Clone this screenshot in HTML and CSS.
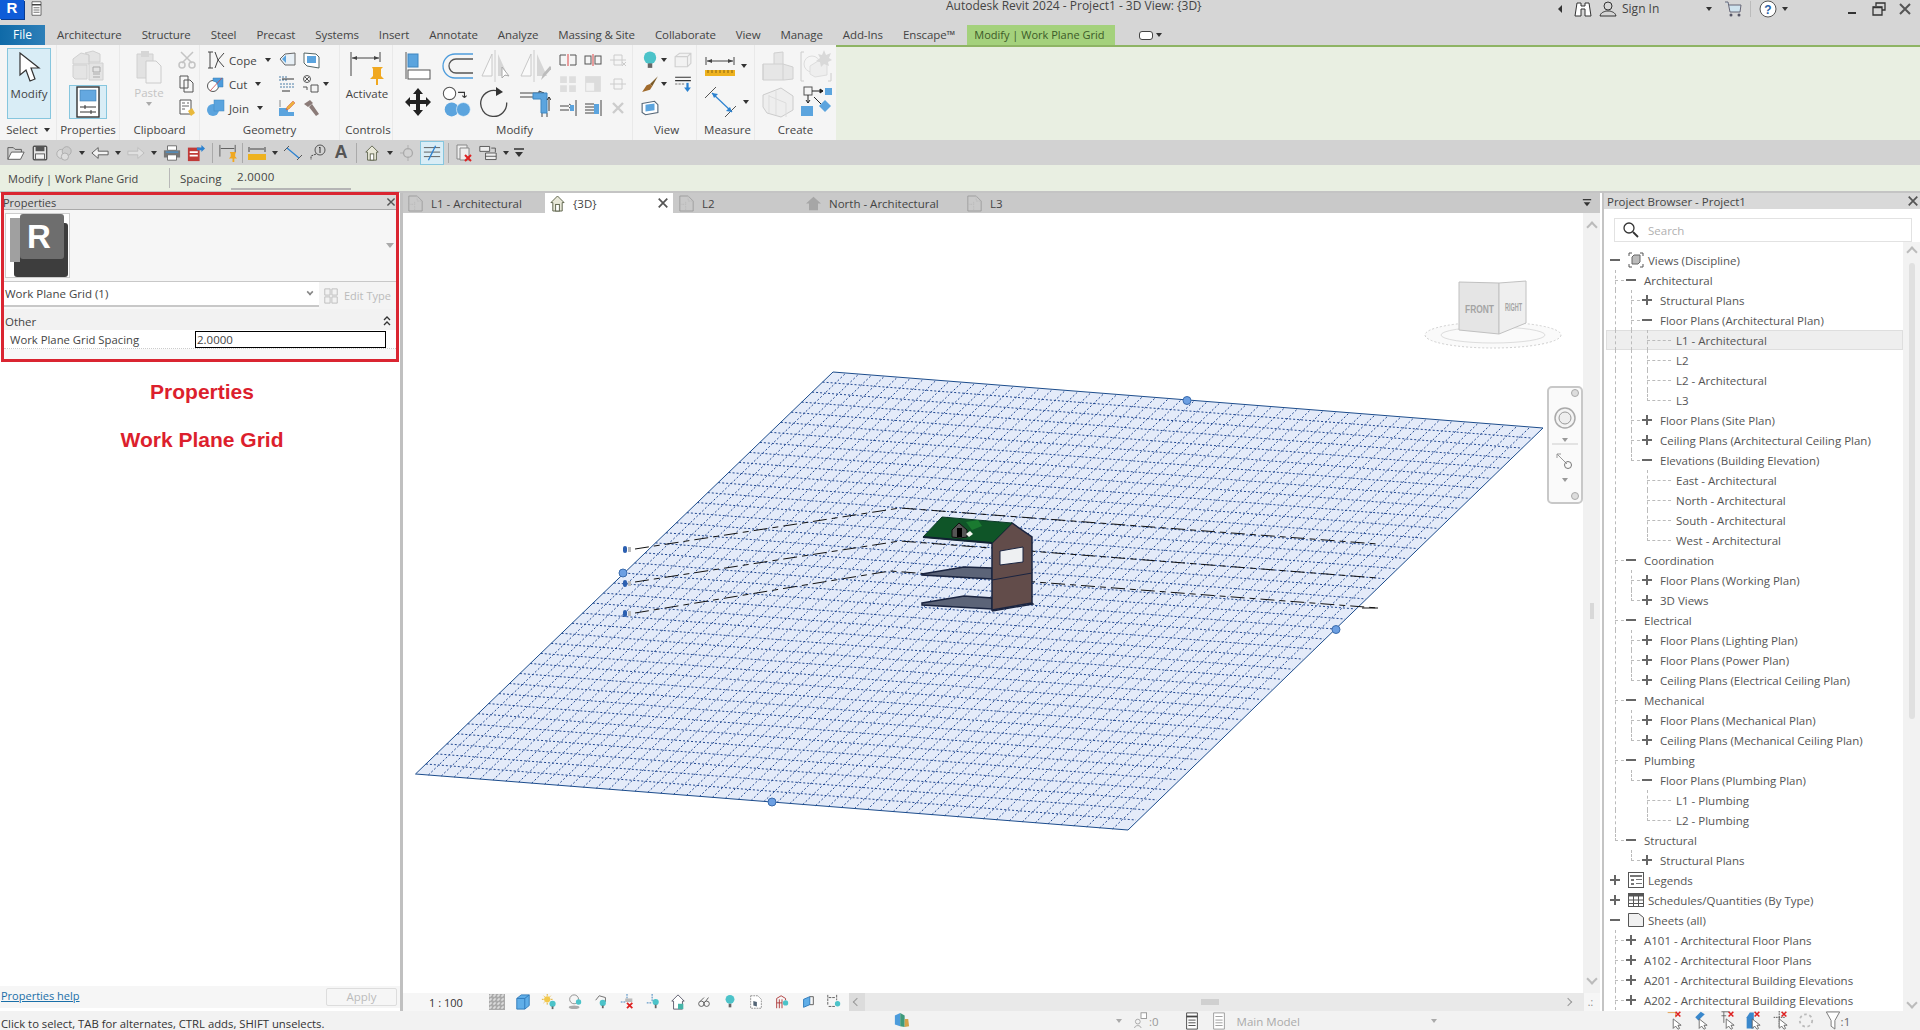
FILE: index.html
```html
<!DOCTYPE html>
<html lang="en">
<head>
<meta charset="utf-8">
<title>Autodesk Revit 2024</title>
<link rel="stylesheet" href="styles.css">
</head>
<body>
<svg class="sprite" aria-hidden="true">
  <defs>
    <symbol id="cursor" viewBox="0 0 24 32"><path d="M3 1v22l6-5 4 11 5-2-4-11h8z" fill="#fff" stroke="#333" stroke-width="1.2"/></symbol>
    <symbol id="types" viewBox="0 0 32 32"><path d="M1 9l8-6 8 2v9H1zM13 3l8-2 7 3v8h-11V5zM1 15h14v14H3l-2-2zM17 13h14v17H17z" fill="#e4e4e4" stroke="#d0d0d0"/><path d="M21 17h7v5h-7zM21 24h7M21 27h7" fill="none" stroke="#aaa"/></symbol>
    <symbol id="propsheet" viewBox="0 0 24 32"><rect x="1" y="1" width="22" height="30" fill="#fff" stroke="#333" stroke-width="1.4"/><rect x="4" y="4" width="16" height="11" fill="#64a8e0" stroke="#3f7db0" stroke-width=".6"/><path d="M4 21h16M4 26h16M9 19v4M15 24v4" stroke="#333" fill="none"/></symbol>
    <symbol id="paste" viewBox="0 0 28 34"><path d="M2 4h16v24H2z" fill="#e2e2e2" stroke="#d0d0d0"/><rect x="6" y="1" width="8" height="6" fill="#d6d6d6"/><path d="M11 11h10l5 5v17H11z" fill="#f4f4f4" stroke="#ccc"/></symbol>
    <symbol id="cut" viewBox="0 0 18 18"><path d="M3 1l11 11M15 1L4 12" stroke="#c4c4c4" stroke-width="1.5" fill="none"/><circle cx="4" cy="14" r="3" fill="none" stroke="#c4c4c4" stroke-width="1.5"/><circle cx="14" cy="14" r="3" fill="none" stroke="#c4c4c4" stroke-width="1.5"/></symbol>
    <symbol id="copy" viewBox="0 0 18 18"><path d="M2 1h8v12H2zM6 5h6l3 3v9H6z" fill="#f7f7f7" stroke="#555"/></symbol>
    <symbol id="match" viewBox="0 0 18 18"><path d="M2 1h11v14H2z" fill="#fff" stroke="#555"/><path d="M4 4h3M9 4h2M4 7h7M4 10h3" stroke="#666"/><path d="M10 12l4-3 3 5-4 3z" fill="#e9b93c"/></symbol>
    <symbol id="cope" viewBox="0 0 18 18"><path d="M1 1h5M1 17h5M3 1v16M8 1l3 8-3 8M17 2l-6 7 6 7" fill="none" stroke="#444"/></symbol>
    <symbol id="cutg" viewBox="0 0 18 18"><circle cx="6" cy="11" r="5.500" fill="#fff" stroke="#555"/><path d="M6 3h10v9h-5a6 6 0 0 0-5-6z" fill="#4d9cdc" stroke="#3a7db2" stroke-width=".5"/><path d="M3 16l12-13" stroke="#c44" stroke-width=".8"/></symbol>
    <symbol id="join" viewBox="0 0 18 18"><circle cx="6" cy="11" r="6" fill="#5ba4de"/><rect x="7" y="1" width="10" height="11" fill="#5ba4de" stroke="#3f86c0" stroke-width=".5"/></symbol>
    <symbol id="g1" viewBox="0 0 18 18"><path d="M7 3l10-1v12H7L2 8z" fill="#e8f0f6" stroke="#666"/><path d="M8 4l-4 4 4 4" fill="#5ba4de"/></symbol>
    <symbol id="g2" viewBox="0 0 18 18"><path d="M2 2l12 1 3 3v11L5 15 2 12z" fill="#fff" stroke="#566"/><rect x="5" y="5" width="9" height="7" fill="#5ba4de"/></symbol>
    <symbol id="g3" viewBox="0 0 18 18"><path d="M2 1v6M5 1v6M8 1v6M2 9h14M2 12h14" stroke="#4d7ea8" fill="none" stroke-dasharray="2 1"/><path d="M4 4h12M12 16H4" stroke="#333"/></symbol>
    <symbol id="g4" viewBox="0 0 18 18"><circle cx="5" cy="4" r="3.500" fill="none" stroke="#555"/><path d="M3 2l4 4M7 2L3 6M1 12h4v3M9 10h7v7H9z" stroke="#555" fill="none"/></symbol>
    <symbol id="g5" viewBox="0 0 18 18"><path d="M1 9h9v4h6v4H1z" fill="#5ba4de"/><path d="M9 8l6-6 2 2-6 6-3 1z" fill="#eeb23c" stroke="#c33" stroke-width=".4"/><path d="M2 1v7" stroke="#888"/></symbol>
    <symbol id="g6" viewBox="0 0 18 18"><path d="M2 5l6-4 3 3-5 4zM7 8l3-3 7 10-3 2z" fill="#8b7b78"/></symbol>
    <symbol id="activate" viewBox="0 0 34 34"><path d="M1 1v24M30 1v10M2 7h27" stroke="#444" fill="none"/><path d="M2 7l5-2v4zM29 7l-5-2v4z" fill="#444"/><path d="M22 16h11l-2 2v7l3 3H20l3-3v-7zM26 28h2v6h-2z" fill="#f0a820"/></symbol>
    <symbol id="align" viewBox="0 0 26 28"><path d="M1 0v27" stroke="#555"/><rect x="3" y="2" width="10" height="13" fill="#5ba4de" stroke="#3f86c0"/><rect x="3" y="18" width="22" height="9" fill="#fff" stroke="#555"/></symbol>
    <symbol id="offset" viewBox="0 0 32 28"><path d="M32 2H14a12 12 0 0 0 0 24h18" fill="none" stroke="#4d9cdc" stroke-width="1.3"/><path d="M32 7H15a7 7 0 0 0 0 14h17" fill="none" stroke="#555" stroke-width="1.3"/></symbol>
    <symbol id="mirror" viewBox="0 0 32 32"><path d="M12 4L2 26h10z" fill="#fafafa" stroke="#c8c8c8"/><path d="M15 0v32" stroke="#ccc"/><path d="M18 4l10 22H18z" fill="#d6d6d6"/><path d="M22 17v11l3-3 4 1z" fill="#fff" stroke="#aaa"/></symbol>
    <symbol id="mirror2" viewBox="0 0 32 32"><path d="M12 4L2 26h10z" fill="#fafafa" stroke="#c8c8c8"/><path d="M15 0v32" stroke="#ccc"/><path d="M18 4l10 22H18z" fill="#d6d6d6"/><path d="M22 30l2-6 7-8 2 2-7 8z" fill="#bcbcbc"/></symbol>
    <symbol id="move" viewBox="0 0 26 28"><path d="M13 0l5 6h-3v6h6V9l5 5-5 5v-3h-6v6h3l-5 6-5-6h3v-6H5v3l-5-5 5-5v3h6V6H8z" fill="#222"/></symbol>
    <symbol id="copyb" viewBox="0 0 30 30"><circle cx="8" cy="7" r="5.800" fill="#fff" stroke="#555"/><path d="M16 6h6v5M22 11l-2-2M22 11l2-2" fill="none" stroke="#333"/><circle cx="10" cy="22" r="6.500" fill="#5ba4de"/><circle cx="21" cy="22" r="6.500" fill="#5ba4de" stroke="#f0f7fc" stroke-width=".6"/></symbol>
    <symbol id="rotate" viewBox="0 0 30 32"><path d="M19 7A13 13 0 1 1 6 8" fill="none" stroke="#444" stroke-width="1.3" transform="rotate(60 15 18) translate(0 1)"/><path d="M15 1l7 5-7 4z" fill="#333"/></symbol>
    <symbol id="trim" viewBox="0 0 32 30"><path d="M1 6h24M1 10h14M25 6l-5-2v4zM23 26v4M28 26v4" stroke="#444" fill="none"/><path d="M14 6h14v20h-6V12h-8z" fill="#5ba4de" stroke="#3f86c0"/><path d="M30 10v14M30 10l-2 3M30 10l2 3" stroke="#333" fill="none"/></symbol>
    <symbol id="s1" viewBox="0 0 18 12"><path d="M7 1H1v10h6M11 1h6v10h-6" fill="none" stroke="#555"/><path d="M9 0v12" stroke="#d44"/></symbol>
    <symbol id="s2" viewBox="0 0 18 12"><rect x="1" y="2" width="6" height="8" fill="none" stroke="#555"/><rect x="11" y="2" width="6" height="8" fill="none" stroke="#555"/><path d="M9 0v12" stroke="#d44"/></symbol>
    <symbol id="s3" viewBox="0 0 18 14"><path d="M1 7h16M5 2h8v10H5z" fill="none" stroke="#ccc"/><path d="M13 9l4 4M17 9l-4 4" stroke="#ccc"/></symbol>
    <symbol id="s4" viewBox="0 0 16 16"><path d="M1 1h6v6H1zM9 1h6v6H9zM1 9h6v6H1zM9 9h6v6H9z" fill="#dedede"/></symbol>
    <symbol id="s5" viewBox="0 0 16 16"><path d="M1 1h14v14H1z" fill="#dcdcdc"/><rect x="2" y="7" width="7" height="7" fill="#f2f2f2"/></symbol>
    <symbol id="s6" viewBox="0 0 18 12"><path d="M1 6h16M5 1h8v10H5z" fill="none" stroke="#ccc"/></symbol>
    <symbol id="s7" viewBox="0 0 18 16"><path d="M1 6h9M1 10h9M10 4l3 2-3 2M17 0v16" stroke="#444" fill="none"/><rect x="11" y="5" width="4" height="6" fill="#5ba4de"/></symbol>
    <symbol id="s8" viewBox="0 0 18 16"><path d="M1 4h9M1 7h9M1 10h9M1 13h9M17 0v16" stroke="#444" fill="none"/><rect x="10" y="4" width="5" height="10" fill="#5ba4de"/></symbol>
    <symbol id="xg" viewBox="0 0 14 14"><path d="M2 2l10 10M12 2L2 12" stroke="#ccc" stroke-width="2.400"/></symbol>
    <symbol id="bulb" viewBox="0 0 14 16"><circle cx="7" cy="6" r="5.500" fill="#4cc3c9"/><rect x="5" y="11" width="4" height="4" fill="#666"/></symbol>
    <symbol id="boxg" viewBox="0 0 16 14"><path d="M1 4l4-3h10v9l-3 3H1zM1 4h11v9M12 4l3-3" fill="#f2f2f2" stroke="#d0d0d0"/></symbol>
    <symbol id="brush" viewBox="0 0 16 16"><path d="M15 1L8 8l2 2z" fill="#7c5b28"/><path d="M8 8l-3 1-4 6 7-2 2-3z" fill="#a06a2c"/></symbol>
    <symbol id="lines" viewBox="0 0 16 16"><path d="M1 2h14M1 5h14" stroke="#333"/><path d="M1 8h8" stroke="#777" stroke-dasharray="2 1"/><path d="M12 7v6" stroke="#2c82d0" stroke-width="2"/><path d="M9 11h6l-3 4z" fill="#2c82d0"/></symbol>
    <symbol id="section" viewBox="0 0 16 14"><path d="M1 3l11-2 3 3v7L4 13 1 11z" fill="#fff" stroke="#567"/><path d="M4 4l8-1v6l-8 1z" fill="#5ba4de"/></symbol>
    <symbol id="ruler" viewBox="0 0 30 20"><path d="M1 1v8M29 1v8M2 5h26" stroke="#444" fill="none"/><path d="M2 5l5-2v4zM28 5l-5-2v4z" fill="#444"/><rect x="0" y="14" width="30" height="6" fill="#eeb21e"/><path d="M3 14v3M7 14v3M11 14v3M15 14v3M19 14v3M23 14v3M27 14v3" stroke="#8a6410"/></symbol>
    <symbol id="aligned" viewBox="0 0 32 32"><path d="M0 12L11 1M20 31l11-11" stroke="#555" fill="none"/><path d="M7 7l20 19" stroke="#2c82d0" stroke-width="1.200"/><path d="M7 7l6 1-4 4zM27 26l-6-1 4-4z" fill="#2c82d0"/></symbol>
    <symbol id="c1" viewBox="0 0 32 30"><path d="M1 13h11V2l9-1v12l10 3v12l-9 1H1z" fill="#e6e6e6" stroke="#d0d0d0"/><path d="M1 13v16M12 13h9v16" stroke="#d0d0d0" fill="none"/></symbol>
    <symbol id="c2" viewBox="0 0 32 32"><path d="M4 2H1v29h3M28 31h3v-8" fill="none" stroke="#ccc"/><circle cx="12" cy="14" r="8" fill="none" stroke="#ddd"/><path d="M10 16l8-5 9 3v11l-12 2-5-3z" fill="#eee" stroke="#ddd"/><path d="M24 0l2 5 5-2-2 5 3 2-4 2 1 4-5-2-3 3-1-5-4-1 4-3-2-4 4 1z" fill="#d9d9d9"/></symbol>
    <symbol id="c3" viewBox="0 0 32 30"><path d="M1 8l18-7 12 8v14l-12 7L5 26 1 20z" fill="#eee" stroke="#ccc"/><path d="M7 8v18M14 4v24M7 9l17 7v14" fill="none" stroke="#ddd"/></symbol>
    <symbol id="c4" viewBox="0 0 32 32"><rect x="4" y="1" width="8" height="8" fill="none" stroke="#555"/><path d="M12 5h11M23 5l-3-2v4z" stroke="#222" fill="#222"/><rect x="25" y="2" width="7" height="7" fill="#5ba4de"/><path d="M8 9v8M14 11l7 7M8 17l-2-3M8 17l2-3" stroke="#222" fill="none"/><rect x="1" y="20" width="12" height="10" fill="#5ba4de"/><path d="M25 14l6 6-6 6-6-6z" fill="#5ba4de"/></symbol>
    <symbol id="open" viewBox="0 0 20 18"><path d="M1 16V3h6l2 2h7v3" fill="none" stroke="#555"/><path d="M1 16l4-8h14l-4 8z" fill="#fff" stroke="#555"/></symbol>
    <symbol id="save" viewBox="0 0 18 18"><rect x="1.500" y="1.500" width="15" height="15" rx="1" fill="#e8e8e8" stroke="#555" stroke-width="1.600"/><rect x="4" y="2" width="10" height="5" fill="#555"/><rect x="4" y="10" width="10" height="6" fill="#f4f4f4" stroke="#555"/></symbol>
    <symbol id="sync" viewBox="0 0 20 18"><circle cx="7" cy="10" r="5" fill="#ddd" stroke="#aaa"/><circle cx="13" cy="7" r="5" fill="#ccc" stroke="#aaa"/><circle cx="11" cy="13" r="4" fill="#ddd" stroke="#aaa"/></symbol>
    <symbol id="undo" viewBox="0 0 20 14"><path d="M8 1L1 7l7 6V9h11V5H8z" fill="#f3f3f3" stroke="#555"/></symbol>
    <symbol id="redo" viewBox="0 0 20 14"><path d="M12 1l7 6-7 6V9H1V5h11z" fill="#e0e0e0" stroke="#bbb"/></symbol>
    <symbol id="print" viewBox="0 0 20 18"><path d="M5 1h10v5H5z" fill="#fff" stroke="#666"/><path d="M1 6h18v8H1z" fill="#777"/><path d="M5 11h10v6H5z" fill="#fff" stroke="#666"/><path d="M3 8h14" stroke="#4a90c8" stroke-width="1.500"/></symbol>
    <symbol id="redsheet" viewBox="0 0 20 20"><path d="M1 4h13v15H1z" fill="#c03a38"/><path d="M3 8h9v2H3zM3 12h9v2H3z" fill="#fff"/><path d="M11 4h5V1l4 4-4 4V7h-5z" fill="#2c82d0"/></symbol>
    <symbol id="dimq" viewBox="0 0 20 20"><path d="M1 1v13M18 1v8M2 5h15" stroke="#555" fill="none"/><path d="M12 9h7l-1 2v3l2 2H11l2-2v-3zM15 16h2v4h-2z" fill="#f0a820"/></symbol>
    <symbol id="rulerq" viewBox="0 0 18 14"><path d="M1 1v5M17 1v5M2 3h14" stroke="#444" fill="none"/><rect y="8" width="18" height="6" fill="#eeb21e"/></symbol>
    <symbol id="alq" viewBox="0 0 18 18"><path d="M0 7l5-5M13 16l5-5" stroke="#555" fill="none"/><path d="M3 4l12 10" stroke="#2c82d0" stroke-width="1.300"/></symbol>
    <symbol id="tagq" viewBox="0 0 18 18"><circle cx="12" cy="6" r="5" fill="none" stroke="#555"/><path d="M11 4l1-1v6" stroke="#333" fill="none"/><path d="M8 10l-5 2v4" stroke="#444" stroke-dasharray="2 1" fill="none"/></symbol>
    <symbol id="home" viewBox="0 0 16 18"><path d="M8 1L1 8h2v9h10V8h2z" fill="#e8e8d8" stroke="#5a6048"/><rect x="6" y="10" width="4" height="7" fill="#fff" stroke="#5a6048"/></symbol>
    <symbol id="homeg" viewBox="0 0 20 18"><path d="M10 0L0 9h4v9h12V9h4z" fill="#a6a6a6"/></symbol>
    <symbol id="diamond" viewBox="0 0 18 18"><circle cx="9" cy="9" r="5" fill="none" stroke="#aaa" stroke-width="1.500"/><path d="M9 0v5M9 13v5M0 9h4" stroke="#aaa"/></symbol>
    <symbol id="thin" viewBox="0 0 20 18"><path d="M1 3h18M1 8h18M1 13h18" stroke="#555"/><path d="M6 17L14 1" stroke="#2c82d0" stroke-width="1.500"/></symbol>
    <symbol id="closeh" viewBox="0 0 18 18"><path d="M2 1h10v14H2z" fill="#eee" stroke="#888"/><path d="M5 4h9v12H5z" fill="#eee" stroke="#888"/><path d="M10 11l6 6M16 11l-6 6" stroke="#d22" stroke-width="2"/></symbol>
    <symbol id="switch" viewBox="0 0 22 18"><path d="M1 1h12v6H1zM8 9h13v8H8zM8 13h13" fill="#eee" stroke="#444"/><path d="M15 3h5v5" fill="none" stroke="#444"/></symbol>
    <symbol id="custom" viewBox="0 0 12 10"><path d="M1 1h10" stroke="#333" stroke-width="1.500"/><path d="M2 4h8L6 9z" fill="#333"/></symbol>
    <symbol id="sheet" viewBox="0 0 18 20"><path d="M1 1h10l6 6v12H1z" fill="none" stroke="#999"/><path d="M11 1v6h6M1 11h7v8M8 8v3" fill="none" stroke="#bbb" stroke-dasharray="2 1"/></symbol>
    <symbol id="binoc" viewBox="0 0 18 16"><path d="M3 2h4v3h4V2h4l2 13h-6V8H7v7H1z" fill="#fff" stroke="#333"/></symbol>
    <symbol id="person" viewBox="0 0 18 16"><circle cx="9" cy="5" r="4" fill="none" stroke="#333"/><path d="M1 15c1-4 4-4 6-5h4c2 1 5 1 6 5z" fill="none" stroke="#333"/></symbol>
    <symbol id="cart" viewBox="0 0 18 16"><path d="M1 1h3l2 10h10l1-7H5" fill="#cfe3ee" stroke="#667"/><circle cx="7" cy="14" r="1.500" fill="#556"/><circle cx="15" cy="14" r="1.500" fill="#556"/></symbol>
    <symbol id="help" viewBox="0 0 18 18"><circle cx="9" cy="9" r="8" fill="#fff" stroke="#555"/><text x="9" y="13.500" font-size="12" font-weight="700" text-anchor="middle" fill="#2b62a8" font-family="Liberation Sans">?</text></symbol>
    <symbol id="restore" viewBox="0 0 14 14"><path d="M4 4V1h9v7h-3" fill="none" stroke="#333" stroke-width="1.300"/><path d="M1 5h9v8H1z" fill="none" stroke="#333" stroke-width="1.300"/><path d="M1 5.500h9" stroke="#333" stroke-width="1.500"/></symbol>
    <symbol id="xd" viewBox="0 0 14 14"><path d="M2 2l10 10M12 2L2 12" stroke="#555" stroke-width="2"/></symbol>
    <symbol id="views" viewBox="0 0 16 16"><path d="M1 4V1h3M12 1h3v3M1 12v3h3M12 15h3v-3" fill="none" stroke="#555"/><path d="M4 5l2-2h6v7l-2 2H4z" fill="#bbb" stroke="#666"/></symbol>
    <symbol id="legends" viewBox="0 0 16 16"><rect x=".5" y=".5" width="15" height="15" fill="#fff" stroke="#555"/><path d="M2 3h12v2H2zM3 7h3v2H3zM8 7h6v1H8zM3 11h3v2H3zM8 11h6v1H8z" fill="#777"/></symbol>
    <symbol id="sched" viewBox="0 0 16 14"><rect x=".5" y=".5" width="15" height="13" fill="#fff" stroke="#555"/><rect x="1" y="1" width="14" height="2.500" fill="#555"/><path d="M1 7h14M1 10.500h14M5.500 3v10M10.500 3v10" stroke="#555"/></symbol>
    <symbol id="sheetb" viewBox="0 0 16 14"><path d="M.5.5h10l5 4v9H.500z" fill="#f0f0f0" stroke="#555"/></symbol>
    <symbol id="search" viewBox="0 0 16 16"><circle cx="6" cy="6" r="5" fill="none" stroke="#333" stroke-width="1.300"/><path d="M10 10l5 5" stroke="#333" stroke-width="1.800"/></symbol>
    <symbol id="edittype" viewBox="0 0 16 18"><path d="M1 1h6v7H1zM9 1h6v7H9zM1 10h6v7H1zM9 10h6v7H9z" fill="#f2f2f2" stroke="#bbb"/></symbol>
    <symbol id="dblup" viewBox="0 0 8 12"><path d="M1 5l3-3 3 3M1 10l3-3 3 3" fill="none" stroke="#333" stroke-width="1.300"/></symbol>
    <symbol id="vgrid" viewBox="0 0 16 16"><rect width="16" height="16" fill="#aaa"/><path d="M0 2h16M0 6h16M0 10h16M0 14h16M2 0v16M6 0v16M10 0v16M14 0v16" stroke="#eee" stroke-dasharray="2 2"/></symbol>
    <symbol id="vcube" viewBox="0 0 16 18"><path d="M1 5l5-4h9v12l-5 4H1z" fill="#60aee8" stroke="#2c78b8"/><path d="M1 5h9v12M10 5l5-4" stroke="#2c78b8" fill="none"/></symbol>
    <symbol id="vsun" viewBox="0 0 16 18"><circle cx="6" cy="6" r="3.500" fill="#f2c84a"/><path d="M6 0v2M6 10v2M0 6h2M10 6h2M2 2l1 1M10 2L9 3M2 10l1-1" stroke="#e0a820"/><circle cx="12" cy="11" r="3.500" fill="#4cc3c9"/><rect x="11" y="14" width="2" height="3" fill="#666"/></symbol>
    <symbol id="vshadow" viewBox="0 0 16 18"><circle cx="7" cy="6" r="5" fill="none" stroke="#888"/><ellipse cx="7" cy="15" rx="6" ry="2" fill="#aaa"/><circle cx="12" cy="9" r="3" fill="#4cc3c9"/></symbol>
    <symbol id="vcrop" viewBox="0 0 16 18"><path d="M2 7l4-5 7 2v5" fill="none" stroke="#666"/><circle cx="10" cy="10" r="3.500" fill="#4cc3c9"/><rect x="9" y="13" width="2" height="3" fill="#666"/></symbol>
    <symbol id="vcropx" viewBox="0 0 16 18"><path d="M8 0v7M1 9h6" stroke="#2c78b8" stroke-dasharray="2 1"/><rect x="6" y="5" width="8" height="4" fill="#bbb"/><path d="M8 10l6 6M14 10l-6 6" stroke="#d22" stroke-width="2"/></symbol>
    <symbol id="vpin" viewBox="0 0 16 18"><path d="M7 0v8M1 10h6" stroke="#2c78b8" stroke-dasharray="2 1"/><circle cx="11" cy="9" r="3.500" fill="#4cc3c9"/><rect x="10" y="12" width="2" height="4" fill="#666"/></symbol>
    <symbol id="vhome" viewBox="0 0 16 18"><path d="M8 1L1 8h2v9h10V8h2z" fill="#fff" stroke="#556"/><rect x="8" y="11" width="6" height="6" fill="#45b4a8"/></symbol>
    <symbol id="vglass" viewBox="0 0 16 18"><circle cx="5" cy="11" r="3" fill="none" stroke="#555"/><circle cx="11" cy="11" r="3" fill="none" stroke="#555"/><path d="M4 8l4-4M10 8l3-4" stroke="#555"/></symbol>
    <symbol id="vbulb" viewBox="0 0 16 18"><circle cx="8" cy="6" r="5" fill="#4cc3c9"/><rect x="6.500" y="11" width="3" height="4" fill="#666"/></symbol>
    <symbol id="vsheet" viewBox="0 0 16 18"><path d="M2 2h8l4 4v10H2z" fill="#fff" stroke="#888" stroke-dasharray="2 1"/><path d="M5 8l4 1v5l-4-1z" fill="#567"/></symbol>
    <symbol id="vred" viewBox="0 0 16 18"><path d="M2 16V5l5-3 5 3v2" fill="none" stroke="#a33"/><path d="M5 16V6M8 16V6M2 10h6" stroke="#a33"/><circle cx="12" cy="10" r="3" fill="#4cc3c9"/></symbol>
    <symbol id="vbox" viewBox="0 0 16 18"><path d="M3 6l7-3v9l-7 3z" fill="#60aee8" stroke="#2c78b8"/><path d="M10 3h4v9h-4" fill="none" stroke="#555"/></symbol>
    <symbol id="vdim" viewBox="0 0 16 18"><path d="M1 1v12M11 1v6M2 4h8M2 14h7" stroke="#555" stroke-dasharray="3 1"/><circle cx="12" cy="11" r="3" fill="#4cc3c9"/></symbol>
    <symbol id="stsel" viewBox="0 0 18 24"><path d="M1 2h10v6" fill="none" stroke="#e09030"/><path d="M8 10v12l3-3 3 4 2-1-2-4h4z" fill="#fff" stroke="#555"/><path d="M11 1l6 6M17 1l-6 6" stroke="#d22" stroke-width="2"/></symbol>
    <symbol id="stsel2" viewBox="0 0 18 24"><path d="M3 8l7-7 5 3-8 8z" fill="#3a88cc"/><path d="M8 10v12l3-3 3 4 2-1-2-4h4z" fill="#fff" stroke="#555"/></symbol>
    <symbol id="stsel3" viewBox="0 0 18 24"><path d="M2 1h10M5 1v14M2 6h6" stroke="#555" fill="none"/><path d="M8 10v12l3-3 3 4 2-1-2-4h4z" fill="#fff" stroke="#555"/><path d="M11 1l6 6M17 1l-6 6" stroke="#d22" stroke-width="2"/></symbol>
    <symbol id="stsel4" viewBox="0 0 18 24"><path d="M1 8l4-6h5v20H1z" fill="#3a88cc"/><path d="M8 10v12l3-3 3 4 2-1-2-4h4z" fill="#fff" stroke="#555"/><path d="M11 1l6 6M17 1l-6 6" stroke="#d22" stroke-width="2"/></symbol>
    <symbol id="stsel5" viewBox="0 0 18 24"><path d="M8 0v20M1 8h14" stroke="#333" stroke-dasharray="2 1"/><path d="M8 10v12l3-3 3 4 2-1-2-4h4z" fill="#fff" stroke="#555"/><path d="M11 1l6 6M17 1l-6 6" stroke="#d22" stroke-width="2"/></symbol>
    <symbol id="stdrag" viewBox="0 0 18 18"><circle cx="9" cy="9" r="7" fill="none" stroke="#bbb" stroke-width="2" stroke-dasharray="3 3"/></symbol>
    <symbol id="funnel" viewBox="0 0 16 20"><path d="M1 1h14l-5 9v9l-4-3v-6z" fill="#fff" stroke="#777"/></symbol>
    <symbol id="worksets" viewBox="0 0 18 20"><circle cx="5" cy="12" r="3" fill="none" stroke="#999"/><path d="M1 20c0-4 8-4 8 0" fill="none" stroke="#999"/><rect x="9" y="1" width="7" height="7" fill="#fff" stroke="#888"/></symbol>
    <symbol id="slist" viewBox="0 0 14 20"><path d="M1 1h12v18H1z" fill="#fff" stroke="#444"/><path d="M1 5h12" stroke="#444" stroke-width="2"/><path d="M3 9h8M3 12h8M3 15h8" stroke="#444"/></symbol>
    <symbol id="slistg" viewBox="0 0 14 20"><path d="M1 1h12v18H1z" fill="#fff" stroke="#999"/><path d="M3 5h8M3 9h8M3 12h8M3 15h8" stroke="#999"/></symbol>
    <symbol id="bld" viewBox="0 0 18 18"><path d="M1 4l6-3v15l-6-2z" fill="#4c9cdc"/><path d="M7 1l5 3v13l-5-1z" fill="#3e9a7c"/><path d="M12 8h4l1 8-5 1z" fill="#d6a24a"/></symbol>
  </defs>
</svg>

<header class="titlebar">
  <div class="logo">R</div>
  <svg class="t-icon"><use href="#slist"/></svg>
  <div class="apptitle">Autodesk Revit 2024 - Project1 - 3D View: {3D}</div>
  <div class="t-right">
    <span class="tri-l"></span>
    <svg class="i18 m-binoc"><use href="#binoc"/></svg>
    <svg class="i18 m-person"><use href="#person"/></svg>
    <span class="signin">Sign In</span>
    <span class="dd m-dd1"></span>
    <svg class="i18 m-cart"><use href="#cart"/></svg>
    <span class="t-sep"></span>
    <svg class="i18"><use href="#help"/></svg>
    <span class="dd m-dd2"></span>
    <span class="minbtn"></span>
    <svg class="i14 m-rest"><use href="#restore"/></svg>
    <svg class="i14 m-close"><use href="#xd"/></svg>
  </div>
</header>

<nav class="tabs">
  <span class="tab-file">File</span>
  <span class="tab first">Architecture</span><span class="tab">Structure</span><span class="tab">Steel</span><span class="tab">Precast</span><span class="tab">Systems</span><span class="tab">Insert</span><span class="tab">Annotate</span><span class="tab">Analyze</span><span class="tab">Massing &amp; Site</span><span class="tab">Collaborate</span><span class="tab">View</span><span class="tab">Manage</span><span class="tab">Add-Ins</span><span class="tab">Enscape™</span>
  <span class="tab-ctx">Modify | Work Plane Grid</span>
  <span class="ctx-extra"><span class="ctx-pill"></span><span class="dd"></span></span>
</nav>

<section class="ribbon">
  <div class="panel p-select">
    <div class="pbody">
      <div class="modify-btn"><svg class="i-cursor"><use href="#cursor"/></svg><span>Modify</span></div>
    </div>
    <div class="plabel">Select <span class="dd dd-label"></span></div>
  </div>
  <div class="panel p-props">
    <div class="pbody props-col">
      <svg class="i32"><use href="#types"/></svg>
      <div class="props-btn"><svg class="i-sheet"><use href="#propsheet"/></svg></div>
    </div>
    <div class="plabel">Properties</div>
  </div>
  <div class="panel p-clip">
    <div class="pbody clip-row">
      <div class="paste"><svg class="i-paste"><use href="#paste"/></svg><span>Paste</span><span class="dd dd-grey"></span></div>
      <div class="col3">
        <div class="cell"><svg class="i18"><use href="#cut"/></svg></div>
        <div class="cell"><svg class="i18"><use href="#copy"/></svg></div>
        <div class="cell"><svg class="i18"><use href="#match"/></svg></div>
      </div>
    </div>
    <div class="plabel">Clipboard</div>
  </div>
  <div class="panel p-geom">
    <div class="pbody geom-row">
      <div class="col3 geom-text">
        <div class="cell-t"><svg class="i18"><use href="#cope"/></svg><span>Cope</span><span class="dd"></span></div>
        <div class="cell-t"><svg class="i18"><use href="#cutg"/></svg><span>Cut</span><span class="dd"></span></div>
        <div class="cell-t"><svg class="i18"><use href="#join"/></svg><span>Join</span><span class="dd"></span></div>
      </div>
      <div class="col3">
        <div class="cell"><svg class="i18"><use href="#g1"/></svg></div>
        <div class="cell"><svg class="i18"><use href="#g3"/></svg></div>
        <div class="cell"><svg class="i18"><use href="#g5"/></svg></div>
      </div>
      <div class="col3">
        <div class="cell"><svg class="i18"><use href="#g2"/></svg></div>
        <div class="cell cell-dd"><svg class="i18"><use href="#g4"/></svg><span class="dd"></span></div>
        <div class="cell"><svg class="i18"><use href="#g6"/></svg></div>
      </div>
    </div>
    <div class="plabel">Geometry</div>
  </div>
  <div class="panel p-ctrl">
    <div class="pbody ctrl-col">
      <svg class="i-act"><use href="#activate"/></svg>
      <span>Activate</span>
    </div>
    <div class="plabel">Controls</div>
  </div>
  <div class="panel p-mod">
    <div class="pbody mod-row">
      <div class="big-grid">
        <div class="big"><svg class="i-a"><use href="#align"/></svg></div>
        <div class="big"><svg class="i-b"><use href="#offset"/></svg></div>
        <div class="big"><svg class="i-b"><use href="#mirror"/></svg></div>
        <div class="big"><svg class="i-b"><use href="#mirror2"/></svg></div>
        <div class="big"><svg class="i-a"><use href="#move"/></svg></div>
        <div class="big"><svg class="i-b"><use href="#copyb"/></svg></div>
        <div class="big"><svg class="i-b"><use href="#rotate"/></svg></div>
        <div class="big"><svg class="i-b"><use href="#trim"/></svg></div>
      </div>
      <div class="small-grid">
        <div class="cell"><svg class="i18"><use href="#s1"/></svg></div>
        <div class="cell"><svg class="i18"><use href="#s2"/></svg></div>
        <div class="cell"><svg class="i18"><use href="#s3"/></svg></div>
        <div class="cell"><svg class="i18"><use href="#s4"/></svg></div>
        <div class="cell"><svg class="i18"><use href="#s5"/></svg></div>
        <div class="cell"><svg class="i18"><use href="#s6"/></svg></div>
        <div class="cell"><svg class="i18"><use href="#s7"/></svg></div>
        <div class="cell"><svg class="i18"><use href="#s8"/></svg></div>
        <div class="cell"><svg class="i14"><use href="#xg"/></svg></div>
      </div>
    </div>
    <div class="plabel">Modify</div>
  </div>
  <div class="panel p-view">
    <div class="pbody view-grid">
      <div class="cell cell-dd"><svg class="i18"><use href="#bulb"/></svg><span class="dd"></span></div>
      <div class="cell"><svg class="i18"><use href="#boxg"/></svg></div>
      <div class="cell cell-dd"><svg class="i18"><use href="#brush"/></svg><span class="dd"></span></div>
      <div class="cell"><svg class="i18"><use href="#lines"/></svg></div>
      <div class="cell"><svg class="i18"><use href="#section"/></svg></div>
    </div>
    <div class="plabel">View</div>
  </div>
  <div class="panel p-meas">
    <div class="pbody meas-col">
      <div class="meas-row"><svg class="i-rul"><use href="#ruler"/></svg><span class="dd"></span></div>
      <div class="meas-row"><svg class="i-alg"><use href="#aligned"/></svg><span class="dd"></span></div>
    </div>
    <div class="plabel">Measure</div>
  </div>
  <div class="panel p-create">
    <div class="pbody create-grid">
      <svg class="i-c"><use href="#c1"/></svg>
      <svg class="i-c"><use href="#c2"/></svg>
      <svg class="i-c"><use href="#c3"/></svg>
      <svg class="i-c"><use href="#c4"/></svg>
    </div>
    <div class="plabel">Create</div>
  </div>
  <div class="ribbon-rest"></div>
</section>

<div class="qat">
  <span class="q"><svg class="i18"><use href="#open"/></svg></span>
  <span class="q"><svg class="i16"><use href="#save"/></svg></span>
  <span class="q"><svg class="i18"><use href="#sync"/></svg></span><span class="qd"><i class="dd"></i></span>
  <span class="q"><svg class="i18"><use href="#undo"/></svg></span><span class="qd"><i class="dd"></i></span>
  <span class="q"><svg class="i18"><use href="#redo"/></svg></span><span class="qd"><i class="dd"></i></span>
  <span class="q"><svg class="i18"><use href="#print"/></svg></span>
  <span class="q"><svg class="i18"><use href="#redsheet"/></svg></span>
  <span class="qs"></span>
  <span class="q"><svg class="i18"><use href="#dimq"/></svg></span>
  <span class="qs qs-n"></span>
  <span class="q"><svg class="i18"><use href="#rulerq"/></svg></span><span class="qd"><i class="dd"></i></span>
  <span class="q"><svg class="i18"><use href="#alq"/></svg></span>
  <span class="q"><svg class="i18"><use href="#tagq"/></svg></span>
  <span class="q q-a">A</span>
  <span class="qs qs-n qs-w"></span>
  <span class="q"><svg class="i16"><use href="#home"/></svg></span><span class="qd"><i class="dd"></i></span>
  <span class="q"><svg class="i16"><use href="#diamond"/></svg></span>
  <span class="q q-on"><svg class="i18"><use href="#thin"/></svg></span>
  <span class="qs"></span>
  <span class="q"><svg class="i18"><use href="#closeh"/></svg></span>
  <span class="q"><svg class="i18"><use href="#switch"/></svg></span><span class="qd"><i class="dd"></i></span>
  <span class="q q-c"><svg class="i12"><use href="#custom"/></svg></span>
</div>

<div class="options">
  <span class="opt-title">Modify | Work Plane Grid</span>
  <span class="opt-sep"></span>
  <span class="opt-label">Spacing</span>
  <span class="opt-value">2.0000</span>
</div>

<main class="main">
  <aside class="left">
    <div class="redbox">
      <div class="p-title"><span>Properties</span><svg class="i10"><use href="#xd"/></svg></div>
      <div class="preview">
        <div class="tile"><div class="tile-back"></div><div class="tile-front">R</div></div>
        <span class="tri-d"></span>
      </div>
      <div class="typesel">
        <div class="typename"><span>Work Plane Grid (1)</span><span class="chev-d"></span></div>
        <div class="edittype"><svg class="i16"><use href="#edittype"/></svg><span>Edit Type</span></div>
      </div>
      <div class="group"><span>Other</span><svg class="i-dbl"><use href="#dblup"/></svg></div>
      <div class="prow"><span class="pname">Work Plane Grid Spacing</span><span class="pinput">2.0000</span></div>
    </div>
    <div class="notes">
      <p>Properties</p>
      <p>Work Plane Grid</p>
    </div>
    <div class="p-foot"><a class="phelp">Properties help</a><span class="apply">Apply</span></div>
  </aside>
  <div class="vsep"></div>
  <section class="center">
    <div class="vtabs">
      <div class="vt vt1"><svg class="i-ts"><use href="#sheet"/></svg><span>L1 - Architectural</span></div>
      <div class="vt vt-on"><svg class="i-ts"><use href="#home"/></svg><span>{3D}</span><svg class="i12 vt-x"><use href="#xd"/></svg></div>
      <div class="vt vt2"><svg class="i-ts"><use href="#sheet"/></svg><span>L2</span></div>
      <div class="vt vt3"><svg class="i-ts"><use href="#homeg"/></svg><span>North - Architectural</span></div>
      <div class="vt vt4"><svg class="i-ts"><use href="#sheet"/></svg><span>L3</span></div>
      <span class="vt-more"><svg class="i10"><use href="#custom"/></svg></span>
    </div>
    <div class="canvas-row">
      <div class="canvas">
        <svg class="model" viewBox="403 213 1180 780">
          <path d="M415.500 774L833 372L1543 428L1128 830Z" fill="#e4ebf9"/>
          <path id="gridlines" d="" fill="none" stroke="#1f4690" stroke-width="1" stroke-dasharray="2 2"/>
          <path d="M415.500 774L833 372L1543 428L1128 830Z" fill="none" stroke="#1c4c8c" stroke-width="1"/>
          <g fill="none" stroke="#111" stroke-width="1" stroke-dasharray="14 5 6 5">
            <path d="M635 549L900 508L1378 544"/>
            <path d="M635 582L900 541L1378 578"/>
            <path d="M635 613L890 571L1378 608"/>
          </g>
          <path d="M1362 608h16" stroke="#111"/>
          <g fill="#2b5fb0">
            <rect x="623" y="546" width="4" height="7" rx="2"/>
            <rect x="623" y="580" width="4" height="7" rx="2"/>
            <rect x="623" y="610" width="4" height="7" rx="2"/>
          </g>
          <g fill="#bbb">
            <rect x="628" y="547" width="3" height="5"/>
            <rect x="628" y="581" width="3" height="5"/>
            <rect x="628" y="611" width="3" height="5"/>
          </g>
          <g fill="#6c9fe2" stroke="#3b6cae" stroke-width="1">
            <circle cx="1187" cy="400.500" r="4"/>
            <circle cx="1336" cy="629.500" r="4"/>
            <circle cx="772" cy="802" r="4"/>
            <circle cx="623" cy="573" r="4"/>
          </g>
          <!-- house -->
          <path d="M922 603L964 596L992 598V609L922 605Z" fill="#5c6478" stroke="#1a2440" stroke-width="1.500"/>
          <path d="M922 574L964 567L992 568V579L922 575Z" fill="#5c6478" stroke="#1a2440" stroke-width="1.500"/>
          <path d="M992 543L1012 523L1032 537V603L992 610Z" fill="#624c4a" stroke="#1a2440" stroke-width="1.500"/>
          <path d="M992 580L1032 573" stroke="#1a2440"/>
          <path d="M1032 603L1033 604L992 611" stroke="#1a2440" fill="none" stroke-width="1.500"/>
          <path d="M1000 551L1023 547V562L1000 565Z" fill="#eef0f2" stroke="#1a2440"/>
          <path d="M923 537L942 517L1012 523L992 543Z" fill="#0f5528" stroke="#0c3a28"/>
          <path d="M923 537L992 543" stroke="#123" stroke-width="2"/>
          <path d="M952 537V530L959 523L967 530V537L960 538Z" fill="#555" stroke="#111"/>
          <rect x="957" y="528" width="5" height="9" fill="#000"/>
          <path d="M966 534L970 531L973 534L969 537Z" fill="#f4f6f0"/>
          <path d="M966 522L978 520L982 526L972 530Z" fill="#1a7a30"/>
          <!-- view cube -->
          <ellipse cx="1493" cy="335" rx="68" ry="13" fill="#fafafa" stroke="#d0d0d0" stroke-dasharray="2 2"/>
          <ellipse cx="1493" cy="335" rx="52" ry="8" fill="none" stroke="#ddd"/>
          <path d="M1459 282L1499 283V334L1459 330Z" fill="#e5e5e5" stroke="#c0c0c0"/>
          <path d="M1499 283L1526 281V323L1499 334Z" fill="#efefef" stroke="#c0c0c0"/>
          <text class="vc" x="1465" y="313" textLength="29" lengthAdjust="spacingAndGlyphs">FRONT</text>
          <text class="vc" x="1505" y="311" textLength="17" lengthAdjust="spacingAndGlyphs">RIGHT</text>
          <!-- nav bar -->
          <rect x="1548" y="387" width="34" height="116" rx="4" fill="#fafafa" stroke="#c8c8c8" stroke-width="2"/>
          <circle cx="1575" cy="393" r="3.500" fill="#ddd" stroke="#aaa"/>
          <circle cx="1575" cy="496" r="3.500" fill="#ddd" stroke="#aaa"/>
          <circle cx="1565" cy="418" r="10" fill="#f4f4f4" stroke="#aaa" stroke-width="1.500"/>
          <circle cx="1565" cy="418" r="6" fill="#eee" stroke="#999"/>
          <path d="M1562 438h6l-3 4zM1562 478h6l-3 4z" fill="#999"/>
          <path d="M1552 444h26" stroke="#ccc"/>
          <path d="M1557 454l10 10M1557 454v4M1557 454h4" stroke="#999" fill="none"/>
          <circle cx="1568" cy="465" r="3.500" fill="none" stroke="#777"/>
        </svg>
      </div>
      <div class="vscroll"><span class="chev-up"></span><span class="vs-thumb"></span><span class="chev-down"></span></div>
    </div>
    <div class="viewctl">
      <span class="scale">1 : 100</span>
      <span class="vc-icons">
        <svg class="i16"><use href="#vgrid"/></svg>
        <svg class="i16"><use href="#vcube"/></svg>
        <svg class="i16"><use href="#vsun"/></svg>
        <svg class="i16"><use href="#vshadow"/></svg>
        <svg class="i16"><use href="#vcrop"/></svg>
        <svg class="i16"><use href="#vcropx"/></svg>
        <svg class="i16"><use href="#vpin"/></svg>
        <svg class="i16"><use href="#vhome"/></svg>
        <svg class="i16"><use href="#vglass"/></svg>
        <svg class="i16"><use href="#vbulb"/></svg>
        <svg class="i16"><use href="#vsheet"/></svg>
        <svg class="i16"><use href="#vred"/></svg>
        <svg class="i16"><use href="#vbox"/></svg>
        <svg class="i16"><use href="#vdim"/></svg>
      </span>
      <span class="hs-left"><i class="chev-l"></i></span>
      <span class="hs-track"><i class="hs-thumb"></i><i class="chev-r"></i></span>
      <span class="grip">.:</span>
    </div>
  </section>
  <div class="vsep vsep2"></div>
  <aside class="browser">
    <div class="b-title"><span>Project Browser - Project1</span><svg class="i12"><use href="#xd"/></svg></div>
    <div class="b-search"><svg class="i16"><use href="#search"/></svg><span>Search</span></div>
    <div class="b-body">
      <div class="tree">
        <div class="row r0"><b class="x m"></b><svg class="ti"><use href="#views"/></svg><span>Views (Discipline)</span></div>
        <div class="row"><i class="t"></i><b class="x m"></b><span class="tx">Architectural</span></div>
        <div class="row"><i class="g"></i><i class="t"></i><b class="x p"></b><span class="tx">Structural Plans</span></div>
        <div class="row"><i class="g"></i><i class="t"></i><b class="x m"></b><span class="tx">Floor Plans (Architectural Plan)</span></div>
        <div class="row sel"><i class="g"></i><i class="g"></i><i class="t lf"></i><span>L1 - Architectural</span></div>
        <div class="row"><i class="g"></i><i class="g"></i><i class="t lf"></i><span>L2</span></div>
        <div class="row"><i class="g"></i><i class="g"></i><i class="t lf"></i><span>L2 - Architectural</span></div>
        <div class="row"><i class="g"></i><i class="g"></i><i class="l lf"></i><span>L3</span></div>
        <div class="row"><i class="g"></i><i class="t"></i><b class="x p"></b><span class="tx">Floor Plans (Site Plan)</span></div>
        <div class="row"><i class="g"></i><i class="t"></i><b class="x p"></b><span class="tx">Ceiling Plans (Architectural Ceiling Plan)</span></div>
        <div class="row"><i class="g"></i><i class="l"></i><b class="x m"></b><span class="tx">Elevations (Building Elevation)</span></div>
        <div class="row"><i class="g"></i><i class="e"></i><i class="t lf"></i><span>East - Architectural</span></div>
        <div class="row"><i class="g"></i><i class="e"></i><i class="t lf"></i><span>North - Architectural</span></div>
        <div class="row"><i class="g"></i><i class="e"></i><i class="t lf"></i><span>South - Architectural</span></div>
        <div class="row"><i class="g"></i><i class="e"></i><i class="l lf"></i><span>West - Architectural</span></div>
        <div class="row"><i class="t"></i><b class="x m"></b><span class="tx">Coordination</span></div>
        <div class="row"><i class="g"></i><i class="t"></i><b class="x p"></b><span class="tx">Floor Plans (Working Plan)</span></div>
        <div class="row"><i class="g"></i><i class="l"></i><b class="x p"></b><span class="tx">3D Views</span></div>
        <div class="row"><i class="t"></i><b class="x m"></b><span class="tx">Electrical</span></div>
        <div class="row"><i class="g"></i><i class="t"></i><b class="x p"></b><span class="tx">Floor Plans (Lighting Plan)</span></div>
        <div class="row"><i class="g"></i><i class="t"></i><b class="x p"></b><span class="tx">Floor Plans (Power Plan)</span></div>
        <div class="row"><i class="g"></i><i class="l"></i><b class="x p"></b><span class="tx">Ceiling Plans (Electrical Ceiling Plan)</span></div>
        <div class="row"><i class="t"></i><b class="x m"></b><span class="tx">Mechanical</span></div>
        <div class="row"><i class="g"></i><i class="t"></i><b class="x p"></b><span class="tx">Floor Plans (Mechanical Plan)</span></div>
        <div class="row"><i class="g"></i><i class="l"></i><b class="x p"></b><span class="tx">Ceiling Plans (Mechanical Ceiling Plan)</span></div>
        <div class="row"><i class="t"></i><b class="x m"></b><span class="tx">Plumbing</span></div>
        <div class="row"><i class="g"></i><i class="l"></i><b class="x m"></b><span class="tx">Floor Plans (Plumbing Plan)</span></div>
        <div class="row"><i class="g"></i><i class="e"></i><i class="t lf"></i><span>L1 - Plumbing</span></div>
        <div class="row"><i class="g"></i><i class="e"></i><i class="l lf"></i><span>L2 - Plumbing</span></div>
        <div class="row"><i class="l"></i><b class="x m"></b><span class="tx">Structural</span></div>
        <div class="row"><i class="e"></i><i class="l"></i><b class="x p"></b><span class="tx">Structural Plans</span></div>
        <div class="row r0"><b class="x p"></b><svg class="ti"><use href="#legends"/></svg><span>Legends</span></div>
        <div class="row r0"><b class="x p"></b><svg class="ti"><use href="#sched"/></svg><span>Schedules/Quantities (By Type)</span></div>
        <div class="row r0"><b class="x m"></b><svg class="ti"><use href="#sheetb"/></svg><span>Sheets (all)</span></div>
        <div class="row"><i class="t"></i><b class="x p"></b><span class="tx">A101 - Architectural Floor Plans</span></div>
        <div class="row"><i class="t"></i><b class="x p"></b><span class="tx">A102 - Architectural Floor Plans</span></div>
        <div class="row"><i class="t"></i><b class="x p"></b><span class="tx">A201 - Architectural Building Elevations</span></div>
        <div class="row"><i class="t"></i><b class="x p"></b><span class="tx">A202 - Architectural Building Elevations</span></div>
      </div>
      <div class="b-scroll"><span class="chev-up"></span><span class="bs-thumb"></span><span class="chev-down"></span></div>
    </div>
  </aside>
</main>

<footer class="status">
  <span class="st-text">Click to select, TAB for alternates, CTRL adds, SHIFT unselects.</span>
  <svg class="i16 st-bld"><use href="#bld"/></svg>
  <span class="dd dd-grey st-d1"></span>
  <svg class="i16 st-ws"><use href="#worksets"/></svg><span class="st-n">:0</span>
  <svg class="i16 st-l1"><use href="#slist"/></svg>
  <svg class="i16 st-l2"><use href="#slistg"/></svg>
  <span class="st-model">Main Model</span>
  <span class="dd dd-grey st-d2"></span>
  <span class="st-tools">
    <svg class="i-st"><use href="#stsel"/></svg>
    <svg class="i-st"><use href="#stsel2"/></svg>
    <svg class="i-st"><use href="#stsel3"/></svg>
    <svg class="i-st"><use href="#stsel4"/></svg>
    <svg class="i-st"><use href="#stsel5"/></svg>
    <svg class="i-st"><use href="#stdrag"/></svg>
    <svg class="i-st"><use href="#funnel"/></svg>
  </span>
  <span class="st-n st-one">:1</span>
</footer>
<script src="grid.js"></script>
</body>
</html>
```
FILE: styles.css
```css
* { box-sizing: border-box; }
html, body { margin: 0; padding: 0; }
body {
  width: 1920px; height: 1030px; overflow: hidden;
  display: flex; flex-direction: column;
  font-family: "Open Sans", "Liberation Sans", sans-serif;
  font-size: 11.5px; color: #444; background: #fff;
}
svg { display: block; flex: none; }
.sprite { width: 0; height: 0; position: absolute; }
.i10 { width: 10px; height: 10px; }
.i12 { width: 12px; height: 12px; }
.i14 { width: 14px; height: 14px; }
.i16 { width: 16px; height: 16px; }
.i18 { width: 18px; height: 18px; }
.i32 { width: 32px; height: 32px; }
.dd { display: inline-block; width: 0; height: 0; border: 3.5px solid transparent; border-top: 4px solid #333; border-bottom: 0; flex: none; }
.dd-grey { border-top-color: #aaa; }

/* title bar */
.titlebar { height: 25px; background: #d6d6d6; display: flex; align-items: flex-start; flex: none; }
.logo { width: 24px; height: 19px; background: #0f5cd8; color: #fff; font: 700 15px "Liberation Sans", sans-serif; text-align: center; line-height: 15px; box-shadow: 1px 1px 0 #0a3c90; }
.t-icon { width: 15px; height: 15px; margin: 1px 0 0 5px; }
.apptitle { margin-left: 902px; font-size: 12px; line-height: 12px; color: #444; white-space: nowrap; }
.t-right { margin-left: auto; display: flex; align-items: center; height: 17px; position: relative; }
.tri-l { width: 0; height: 0; border: 4px solid transparent; border-right: 4px solid #333; border-left: 0; margin-right: 12px; }
.m-binoc { margin-right: 7px; }
.m-person { margin-right: 5px; }
.signin { width: 84px; font-size: 12px; }
.m-dd1 { margin-right: 12px; margin-left: 0; }
.m-cart { margin-right: 8px; }
.t-sep { width: 1px; height: 16px; background: #bbb; margin-right: 8px; }
.m-dd2 { margin-left: 5px; margin-right: 60px; }
.minbtn { width: 8px; height: 2px; background: #333; margin-top: 9px; margin-right: 16px; }
.m-rest { margin-right: 12px; }
.m-close { margin-right: 8px; }

/* ribbon tabs */
.tabs { height: 20px; background: #d6d6d6; display: flex; align-items: stretch; flex: none; }
.tab-file { width: 45px; background: linear-gradient(90deg, #0f6aa8, #2d7fb8); color: #fff; text-align: center; line-height: 20px; font-size: 12px; }
.tab { padding: 0 10px; line-height: 20px; color: #444; white-space: nowrap; letter-spacing: -.1px; }
.first { margin-left: 2px; }
.tab-ctx { margin-left: 2px; padding: 0 7px; background: #a4d17c; line-height: 20px; color: #3c5a28; white-space: nowrap; width: 148px; font-size: 11px; }
.ctx-extra { margin-left: 24px; display: flex; align-items: center; gap: 3px; }
.ctx-pill { width: 14px; height: 9px; border: 1px solid #444; border-radius: 3px; background: #fff; }

/* ribbon */
.ribbon { height: 95px; display: flex; flex: none; background: #f5f5f5; }
.panel { display: flex; flex-direction: column; border-right: 1px solid #e9e9e9; padding-top: 3px; }
.pbody { height: 72px; }
.plabel { height: 20px; line-height: 20px; text-align: center; white-space: nowrap; color: #444; }
.p-ctrl .plabel, .p-mod .plabel, .p-view .plabel, .p-meas .plabel { padding-left: 4px; }
.dd-label { margin-left: 3px; vertical-align: 2px; }
.p-select { width: 57px; }
.p-props { width: 63px; }
.p-clip { width: 80px; }
.p-geom { width: 140px; }
.p-ctrl { width: 53px; }
.p-mod { width: 240px; }
.p-view { width: 64px; }
.p-meas { width: 58px; }
.p-create { width: 81px; border-right: 0; }
.ribbon-rest { flex: 1; background: #e9efe2; border-top: 2px solid #8eb464; }

.modify-btn { margin-left: 7px; width: 44px; height: 71px; background: #d9edf6; border: 1px solid #86c6de; display: flex; flex-direction: column; align-items: center; }
.i-cursor { width: 24px; height: 32px; margin-top: 3px; }
.modify-btn span { margin-top: 1px; line-height: 18px; }
.props-col { display: flex; flex-direction: column; align-items: center; padding-top: 2px; }
.props-btn { width: 38px; height: 34px; margin-top: 3px; background: #d9edf6; border: 1px solid #86c6de; display: flex; justify-content: center; align-items: center; }
.i-sheet { width: 24px; height: 32px; }
.clip-row { display: flex; }
.paste { width: 55px; display: flex; flex-direction: column; align-items: center; color: #c4c4c4; padding-top: 2px; padding-left: 3px; }
.i-paste { width: 28px; height: 34px; }
.paste span:nth-child(2) { line-height: 18px; margin-top: 0; }
.col3 { display: flex; flex-direction: column; }
.cell { width: 24px; height: 24px; display: flex; align-items: center; justify-content: center; position: relative; }
.cell-t { height: 24px; display: flex; align-items: center; gap: 4px; }
.cell-t .dd { margin-left: 4px; }
.geom-row { display: flex; padding-left: 7px; }
.geom-text { width: 68px; }
.cell-dd .dd { position: absolute; left: 24px; top: 10px; }
.view-grid .cell-dd .dd { left: 23px; }
.ctrl-col { display: flex; flex-direction: column; align-items: center; padding-top: 3px; padding-left: 2px; }
.i-act { width: 34px; height: 34px; }
.ctrl-col span { margin-top: 0; line-height: 18px; }
.mod-row { display: flex; padding-left: 5px; }
.big-grid { display: grid; grid-template-columns: repeat(4, 39px); grid-template-rows: 36px 36px; width: 158px; }
.big { display: flex; align-items: center; justify-content: center; }
.i-a { width: 26px; height: 28px; }
.i-b { width: 32px; height: 32px; }
.small-grid { display: grid; grid-template-columns: repeat(3, 25px); grid-template-rows: repeat(3, 24px); }
.view-grid { display: grid; grid-template-columns: 33px 24px; grid-template-rows: repeat(3, 24px); padding-left: 5px; }
.meas-col { display: flex; flex-direction: column; padding-left: 8px; }
.meas-row { height: 36px; display: flex; align-items: center; gap: 6px; }
.i-rul { width: 30px; height: 20px; }
.i-alg { width: 32px; height: 32px; }
.create-grid { display: grid; grid-template-columns: 38px 38px; grid-template-rows: 36px 36px; padding-left: 7px; align-items: center; }
.i-c { width: 32px; height: 32px; }

/* QAT */
.qat { height: 25px; background: #d2d2d2; display: flex; align-items: center; padding-left: 4px; flex: none; }
.q { width: 24px; height: 24px; display: flex; align-items: center; justify-content: center; }
.qd { width: 12px; display: flex; justify-content: center; }
.qs { width: 8px; height: 20px; background: linear-gradient(#aaa, #aaa) center / 1px 100% no-repeat; }
.qs-n { width: 5px; }
.qs-w { width: 7px; }
.q-a { font: 700 18px "Liberation Sans", sans-serif; color: #555; }
.q-on { background: #d9edf6; border: 1px solid #86c6de; }
.q-c { margin-left: -5px; }

/* options */
.options { height: 26px; background: #e9efe2; display: flex; align-items: center; padding-left: 8px; flex: none; }
.opt-title { width: 161px; font-size: 11px; }
.opt-sep { width: 1px; height: 20px; background: #b8b8b8; }
.opt-label { margin-left: 10px; width: 51px; }
.opt-value { width: 120px; height: 22px; margin-top: 2px; padding-left: 6px; line-height: 18px; border-bottom: 2px solid #b5b5b5; letter-spacing: .3px; }

/* main */
.main { height: 820px; display: flex; background: #fff; border-top: 2px solid #c4c4c4; flex: none; }
.left { width: 400px; display: flex; flex-direction: column; }
.vsep { width: 3px; background: #c0c0c0; }
.vsep2 { width: 4px; background: linear-gradient(90deg, #fff 0, #fff 2px, #c4c4c4 2px); }
.redbox { width: 398px; height: 170px; margin-left: 1px; margin-top: -1px; border: 3px solid #da2531; background: #f8f8f8; flex: none; }
.p-title { height: 15px; background: #d9d9d9; border-bottom: 1px solid #aaa; display: flex; align-items: center; justify-content: space-between; font-size: 11px; overflow: hidden; }
.p-title span { margin-left: -1px; }
.preview { height: 72px; border-bottom: 1px solid #c8c8c8; background: #f6f6f6; display: flex; align-items: center; justify-content: space-between; padding: 0 2px 0 1px; }
.tile { width: 65px; height: 65px; background: #fff; border: 1px solid #ccc; position: relative; overflow: hidden; }
.tile-back { position: absolute; left: 8px; top: 9px; width: 54px; height: 54px; border-radius: 3px; background: #3d3d3d; }
.tile-front { position: absolute; left: 14px; top: 0; width: 44px; height: 45px; border-radius: 3px; background: #6e6e6e; color: #fff; font: 700 33px/45px "Liberation Sans", sans-serif; text-align: center; padding-right: 6px; }
.tile-front::before { content: ""; position: absolute; left: -10px; top: 4px; width: 10px; height: 44px; background: #a0a0a0; }
.tri-d { width: 0; height: 0; border: 4px solid transparent; border-top: 5px solid #aaa; border-bottom: 0; }
.typesel { height: 27px; display: flex; }
.typename { width: 315px; height: 25px; border-bottom: 2px solid #c8c8c8; display: flex; align-items: center; justify-content: space-between; padding: 0 6px 0 1px; background: #fff; }
.chev-d { width: 6px; height: 6px; border-right: 2px solid #888; border-bottom: 2px solid #888; transform: rotate(45deg) scale(.8); margin-top: -3px; }
.edittype { flex: 1; display: flex; align-items: center; gap: 5px; padding-left: 4px; color: #bbb; background: #f4f4f4; white-space: nowrap; font-size: 11px; }
.group { height: 21px; background: #f2f2f2; display: flex; align-items: center; justify-content: space-between; padding: 3px 5px 0 1px; color: #444; }
.i-dbl { width: 8px; height: 12px; }
.prow { height: 19px; background: #fff; display: flex; align-items: center; padding-left: 6px; border-bottom: 1px dotted #ccc; font-size: 11.3px; }
.pname { width: 185px; }
.pinput { width: 191px; height: 17px; border: 1px solid #000; background: #fff; font-size: 11.5px; line-height: 15px; padding-left: 1px; }
.notes { flex: 1; padding-top: 18px; padding-left: 4px; text-align: center; color: #dc1f2d; font: 700 21px/24px "Liberation Sans", sans-serif; }
.notes p { margin: 0 0 24px; }
.p-foot { height: 22px; display: flex; align-items: center; justify-content: space-between; padding: 0 3px 0 1px; margin-bottom: 3px; background: #f6f6f6; }
.phelp { color: #1a6fa8; text-decoration: underline; font-size: 11px; margin-top: -4px; }
.apply { width: 71px; height: 18px; border: 1px solid #ddd; border-radius: 2px; color: #bbb; text-align: center; line-height: 16px; }

/* center */
.center { width: 1197px; display: flex; flex-direction: column; }
.vtabs { height: 20px; background: #c9c9c9; display: flex; flex: none; position: relative; }
.vt { display: flex; align-items: center; gap: 8px; height: 20px; color: #444; white-space: nowrap; }
.i-ts { width: 15px; height: 17px; }
.vt1 { width: 142px; padding-left: 5px; }
.vt-on { width: 128px; background: #fff; padding-left: 5px; }
.vt-x { margin-left: auto; margin-right: 4px; }
.vt2 { width: 128px; padding-left: 6px; }
.vt3 { width: 166px; padding-left: 5px; }
.vt4 { padding-left: 0; }
.vt-more { margin-left: auto; width: 18px; display: flex; align-items: center; }
.canvas-row { flex: 1; display: flex; min-height: 0; }
.canvas { width: 1180px; position: relative; overflow: hidden; background: #fff; }
.model { width: 1180px; height: 780px; }
.vc { font: 700 10px "Liberation Sans", sans-serif; fill: #a4a4a4; }
.vscroll { width: 17px; background: #f1f1f1; display: flex; flex-direction: column; align-items: center; padding: 6px 0; position: relative; }
.chev-up, .chev-down { width: 8px; height: 8px; border-left: 2px solid #bbb; border-top: 2px solid #bbb; transform: rotate(45deg); margin-top: 4px; }
.chev-down { transform: rotate(225deg); margin-top: auto; margin-bottom: 4px; }
.vs-thumb { width: 4px; height: 16px; background: #d8d8d8; margin-top: 372px; }
.viewctl { height: 18px; background: #f6f6f6; display: flex; align-items: center; flex: none; }
.scale { margin-left: 26px; width: 60px; font-size: 11px; color: #333; }
.vc-icons { display: flex; justify-content: space-between; width: 353px; }
.hs-left { margin-left: 7px; width: 16px; height: 18px; background: #dcdcdc; display: flex; align-items: center; justify-content: center; }
.chev-l, .chev-r { width: 6px; height: 6px; border-left: 1.500px solid #999; border-bottom: 1.500px solid #999; transform: rotate(45deg); display: block; }
.chev-r { transform: rotate(225deg); margin-left: auto; margin-right: 13px; }
.hs-track { width: 719px; height: 18px; background: #e9e9e9; display: flex; align-items: center; padding-left: 336px; }
.hs-thumb { width: 18px; height: 6px; background: #d0d0d0; display: block; }
.grip { width: 13px; color: #888; font-size: 10px; text-align: center; }

/* browser */
.browser { width: 316px; display: flex; flex-direction: column; }
.b-title { height: 16px; background: #d9d9d9; display: flex; align-items: center; justify-content: space-between; padding: 0 1px 0 3px; flex: none; }
.b-search { height: 24px; margin: 9px 8px 0 10px; border: 1px solid #e2e2e2; display: flex; align-items: center; padding-left: 8px; gap: 9px; color: #b0b0b0; flex: none; }
.b-body { flex: 1; display: flex; padding-top: 8px; min-height: 0; }
.tree { width: 299px; padding-left: 2px; }
.row { height: 20px; display: flex; align-items: center; padding-left: 9px; white-space: nowrap; color: #555; font-size: 11.500px; }
.row i { display: block; width: 16px; height: 20px; flex: none; position: relative; }
.row i.g::before, .row i.t::before, .row i.l::before { content: ""; position: absolute; left: 0; top: 0; bottom: 0; border-left: 1px dashed #bbb; }
.row i.l::before { bottom: 9px; }
.row i.t::after, .row i.l::after { content: ""; position: absolute; left: 0; top: 10px; width: 9px; border-top: 1px dashed #bbb; }
.row i.lf { width: 29px; }
.row i.lf::after { width: 24px; }
.x { display: block; width: 12px; height: 12px; margin-left: -6px; position: relative; flex: none; }
.x::before { content: ""; position: absolute; left: 1px; right: 1px; top: 5px; height: 2px; background: #666; }
.x.p::after { content: ""; position: absolute; top: 1px; bottom: 1px; left: 5px; width: 2px; background: #666; }
.tx { margin-left: 7px; }
.ti { width: 16px; height: 16px; margin: 0 4px 0 7px; }
.sel { background: #eeeeee; outline: 1px solid #dedede; outline-offset: -1px; }
.b-scroll { width: 17px; background: #f2f2f2; display: flex; flex-direction: column; align-items: center; padding: 2px 0 0; margin-top: -8px; position: relative; }
.bs-thumb { width: 6px; height: 456px; background: #e0e0e0; border-radius: 3px; margin-top: 7px; }

/* status */
.status { height: 19px; background: #f2f2f2; display: flex; align-items: flex-start; flex: none; color: #333; }
.st-text { width: 894px; padding-left: 1px; font-size: 11.300px; line-height: 13px; padding-top: 6px; height: 19px; }
.st-bld { margin-top: 1px; }
.st-d1 { margin: 8px 0 0 206px; }
.st-ws { margin: 1px 0 0 11px; }
.st-n { color: #999; line-height: 17px; padding-top: 2px; }
.st-l1 { margin: 1px 0 0 25px; height: 18px; }
.st-l2 { margin: 1px 0 0 11px; height: 18px; }
.st-model { margin-left: 10px; color: #aaa; width: 194px; line-height: 17px; padding-top: 2px; }
.st-d2 { margin-top: 8px; }
.st-tools { display: flex; gap: 10.500px; margin-left: 229px; }
.i-st { width: 16px; height: 19px; }
.st-one { margin-left: 0; color: #666; }
```
FILE: grid.js
```js
(function () {
  var a = [415.5, 774], u = [417.5, -402], v = [710, 56];
  var nu = 40, nv = 55, d = "";
  function seg(t0, t1) {
    d += "M" + t0[0].toFixed(1) + " " + t0[1].toFixed(1) + "L" + t1[0].toFixed(1) + " " + t1[1].toFixed(1);
  }
  for (var i = 1; i < nu; i++) {
    var p = [a[0] + u[0] * i / nu, a[1] + u[1] * i / nu];
    seg(p, [p[0] + v[0], p[1] + v[1]]);
  }
  for (var j = 1; j < nv; j++) {
    var q = [a[0] + v[0] * j / nv, a[1] + v[1] * j / nv];
    seg(q, [q[0] + u[0], q[1] + u[1]]);
  }
  document.getElementById("gridlines").setAttribute("d", d);
})();
```
